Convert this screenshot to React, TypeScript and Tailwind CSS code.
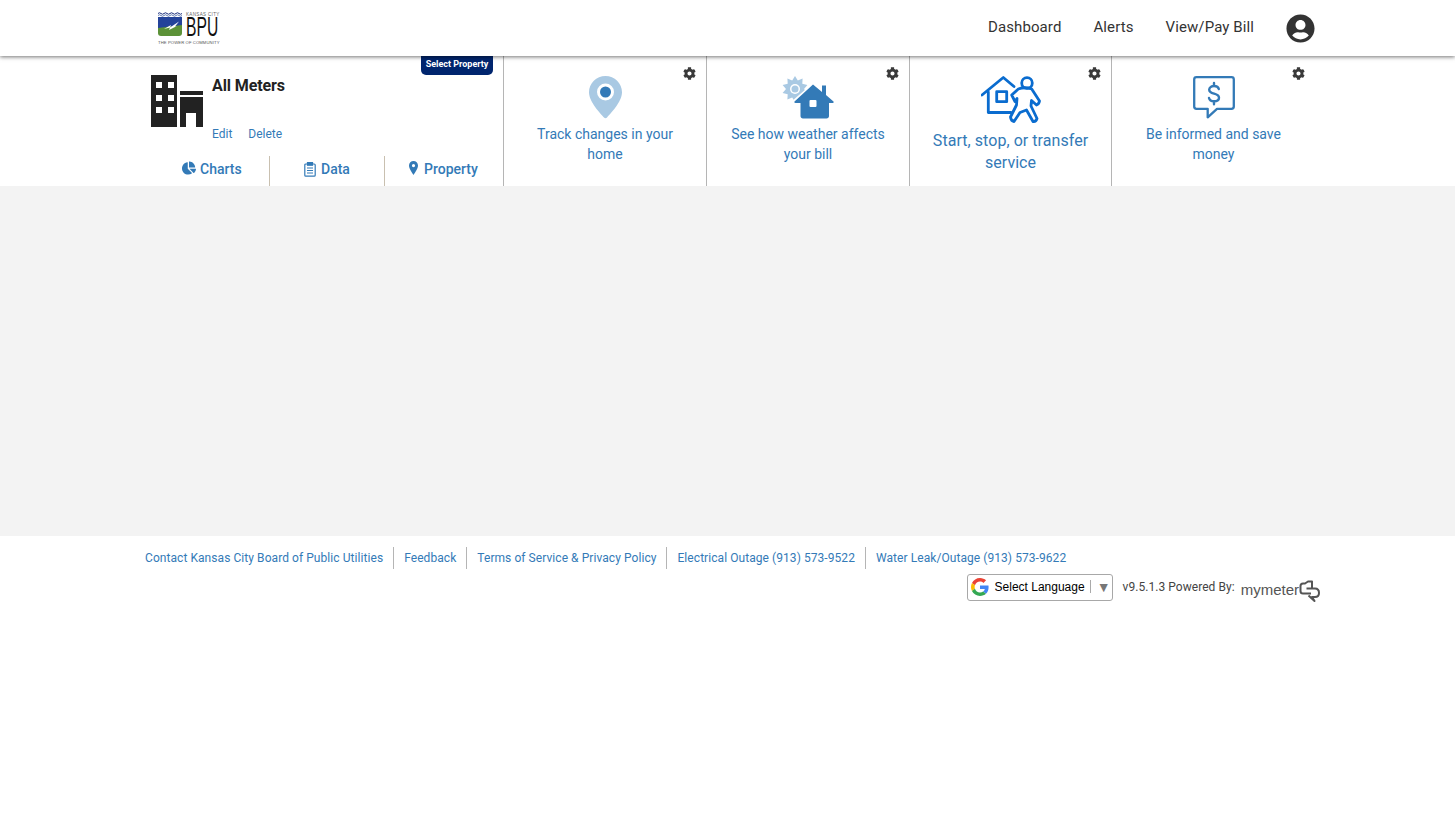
import React from "react";
import { FaUserCircle, FaCog, FaChartPie } from "react-icons/fa";

const blue = "text-[#337ab7]";

function Gear() {
  return <FaCog className="absolute right-[10px] top-[11px] text-[#3a3a3a]" size={13} />;
}

function Logo() {
  return (
    <div className="relative w-[62px] h-[36px] ml-[157px] self-start mt-[11px]">
      <svg width="25" height="26" viewBox="0 0 25 26" className="absolute left-[1px] top-[1px]">
        <path d="M0 1.500q1.500 -1.500 3 0t3 0t3 0t3 0t3 0t3 0t3 0t3 0" fill="none" stroke="#1c2f7c" strokeWidth="1" />
        <path d="M0 3.500q1.500 -1.500 3 0t3 0t3 0t3 0t3 0t3 0t3 0t3 0" fill="none" stroke="#3c5aa0" strokeWidth=".8" />
        <path d="M0 5h24v10L0 17z" fill="#24439a" />
        <path d="M0 16L24 13v8q0 3 -3 3H3q-3 0 -3 -3z" fill="#5c9238" />
        <path d="M6 17l7 -4l-1 2.500l9 -6l-4 5l2 -.5l-8 4l1 -2.500z" fill="#ffffff" />
      </svg>
      <span className="absolute left-[29px] top-[1px] text-[4.5px] leading-[5px] tracking-[0.35px] text-[#666] font-['Liberation_Sans',sans-serif] whitespace-nowrap">KANSAS CITY</span>
      <span className="absolute left-[29px] top-[6px] text-[28px] leading-[20px] text-[#111] font-['Liberation_Sans',sans-serif] origin-left scale-x-[0.56] whitespace-nowrap">BPU</span>
      <span className="absolute left-[1px] top-[29px] text-[4.2px] leading-[5px] tracking-[0.1px] text-[#555] font-['Liberation_Sans',sans-serif] whitespace-nowrap">THE POWER OF COMMUNITY</span>
    </div>
  );
}

function Building() {
  return (
    <svg width="52" height="52" viewBox="0 0 52 52" className="shrink-0">
      <path fillRule="evenodd" fill="#222" d="M0 0h26v52H0zM5 7v6h6V7zm12 0v6h6V7zM5 20v6h6v-6zm12 0v6h6v-6zM5 32v6h6v-6zm12 0v6h6v-6z" />
      <path fill="#222" d="M29 16h23v4H29z" />
      <path fillRule="evenodd" fill="#222" d="M29 22h23v30h-7V38H35v14h-6z" />
    </svg>
  );
}

function Clipboard() {
  return (
    <svg width="12" height="15" viewBox="0 0 12 15" fill="none" stroke="#337ab7" strokeWidth="1.2">
      <rect x="0.8" y="2" width="10.4" height="12.2" rx="1" />
      <rect x="3.500" y="0.6" width="5" height="2.600" fill="#337ab7" />
      <path d="M3 6h6M3 8.500h6M3 11h6" />
    </svg>
  );
}

function SmallPin() {
  return (
    <svg width="9" height="14" viewBox="0 0 9 14" className="mb-[2px]">
      <path fillRule="evenodd" fill="#337ab7" d="M4.500 0C2 0 0 2 0 4.500 0 7.500 3 11.500 4.500 14 6 11.500 9 7.500 9 4.500 9 2 7 0 4.500 0zm0 3a1.600 1.600 0 1 1 0 3.200 1.600 1.600 0 0 1 0-3.200z" />
    </svg>
  );
}

function Pin() {
  return (
    <svg width="33" height="43" viewBox="0 0 33 43">
      <path d="M16.500 0C7.400 0 0 7.300 0 16.300 0 26 12 38 15 41.500c.8 1 2.200 1 3 0C21 38 33 26 33 16.300 33 7.300 25.600 0 16.500 0z" fill="#a9c9e3" />
      <circle cx="16.500" cy="16" r="8.500" fill="#fff" />
      <circle cx="16.500" cy="16" r="5.500" fill="#337ab7" />
    </svg>
  );
}

function sunPath() {
  const pts: string[] = [];
  for (let i = 0; i < 20; i++) {
    const a = (i * Math.PI) / 10;
    const r = i % 2 === 0 ? 13 : 9;
    pts.push(`${(13 + r * Math.sin(a)).toFixed(1)} ${(13 - r * Math.cos(a)).toFixed(1)}`);
  }
  return `M${pts.join("L")}z`;
}

function SunHouse() {
  return (
    <svg width="53" height="43" viewBox="0 0 53 43">
      <path d={sunPath()} fill="#a9c9e3" />
      <circle cx="13" cy="13" r="5" fill="#fff" />
      <circle cx="13" cy="13" r="3.500" fill="#a9c9e3" />
      <path d="M10 25L31 7l8 6.500V8h6v10.500l8 7v3H47V44H17V28.500H10z" fill="#fff" />
      <path d="M12.500 25.500L31 8.500l9 7.500V9.500h4V19l7.500 6.500c.5.800 0 1.500-1 1.500h-3.500V40c0 1.500-1 2.500-2.500 2.500H21c-1.500 0-2.500-1-2.500-2.500V27H13.500c-1 0-1.500-.8-1-1.500z" fill="#337ab7" />
      <rect x="27.500" y="24" width="7" height="7" rx="1" fill="#fff" />
    </svg>
  );
}

function Mover() {
  return (
    <svg width="60" height="48" viewBox="0 0 60 48" fill="none" stroke="#0a6ccf" strokeWidth="2.800" strokeLinejoin="round" strokeLinecap="round">
      <path d="M1 19L22.300 1.500 33 10.500" />
      <path d="M7.300 16v20.500h22.500" />
      <rect x="15.700" y="15.700" width="10" height="10" />
      <circle cx="46" cy="7" r="5.300" />
      <path d="M30.700 19L37.300 13Q44 10.500 50.700 13L58.500 25Q58 28 55.500 29L50.500 24.500L50 30L56 42.500Q55 46 52 45.500L45.500 34L39 36.500L33 45.500Q30 45 29.500 41L35.500 29L36 22.500L34 25.500Z" />
    </svg>
  );
}

function Bubble() {
  return (
    <svg width="43" height="43" viewBox="0 0 43 43" fill="none" className="ml-[2px]">
      <path d="M3.500 1.200h35c1.300 0 2.300 1 2.300 2.300v27c0 1.300-1 2.300-2.300 2.300H24l-9.300 8.500v-8.500H3.500c-1.300 0-2.300-1-2.300-2.300v-27c0-1.300 1-2.300 2.300-2.300z" stroke="#337ab7" strokeWidth="2.300" strokeLinejoin="round" />
      <path d="M25.800 13c-.4-1.800-2.500-3-4.800-3s-4.800 1.200-4.800 3.700c0 5.300 9.800 2.700 9.800 8 0 2.500-2.500 3.600-5 3.600s-4.500-1.100-5-3.300M21 7v3M21 25.300v3" stroke="#337ab7" strokeWidth="2.400" strokeLinecap="round" />
    </svg>
  );
}

function GoogleG() {
  return (
    <svg width="18" height="18" viewBox="0 0 48 48" className="shrink-0 mb-[2px]">
      <path fill="#EA4335" d="M24 9.500c3.500 0 6.700 1.200 9.200 3.600l6.900-6.900C35.900 2.400 30.500 0 24 0 14.600 0 6.500 5.400 2.600 13.200l8 6.200C12.400 13.700 17.700 9.500 24 9.500z" />
      <path fill="#4285F4" d="M46.900 24.500c0-1.600-.2-3.100-.4-4.500H24v9h12.900c-.6 3-2.200 5.500-4.700 7.200l7.700 6c4.500-4.200 7-10.300 7-17.700z" />
      <path fill="#FBBC05" d="M10.500 28.600c-.5-1.400-.8-3-.8-4.600s.3-3.200.8-4.600l-8-6.200C.9 16.500 0 20.100 0 24s.9 7.500 2.600 10.800l7.900-6.200z" />
      <path fill="#34A853" d="M24 48c6.500 0 11.900-2.100 15.900-5.800l-7.700-6c-2.200 1.400-4.900 2.300-8.200 2.300-6.300 0-11.600-4.200-13.500-9.900l-8 6.200C6.500 42.600 14.600 48 24 48z" />
    </svg>
  );
}

function MyMeterMark() {
  return (
    <svg width="21" height="22" viewBox="0 0 21 22" fill="none" stroke="#555" strokeWidth="2" strokeLinejoin="round">
      <path d="M12 13.500H4Q1.500 13.500 1.500 11V6Q1.500 3.500 4 3.500H6L9 1.500H13V8" />
      <path d="M7.500 8.500H16Q20 8.500 20 13Q20 17 16 17H13L15.500 21L9.500 15.500" />
    </svg>
  );
}

function Tile({ children, label, big, width }: { children: React.ReactNode; label: string; big?: boolean; width: string }) {
  return (
    <div className={`relative border-l border-[#b5b5b5] flex flex-col items-center ${width}`}>
      <Gear />
      <div className={`flex items-end justify-center ${big ? "mt-[19px] h-[49px]" : "mt-[20px] h-[43px]"}`}>{children}</div>
      <p className={`text-center text-[#337ab7] w-[170px] ${big ? "mt-[6px] text-[16px] tracking-[0.05px] leading-[22px]" : "mt-[5px] text-[14px] leading-[20px]"}`}>{label}</p>
    </div>
  );
}

export default function App() {
  return (
    <div className="min-h-[832px] bg-white font-['Roboto',sans-serif]">
      <header className="relative z-10 h-[56px] bg-white shadow-[0_1px_4px_rgba(0,0,0,0.55)] flex items-center">
        <Logo />
        <nav className="ml-auto mr-[140px] flex items-center gap-[32px] text-[15px] tracking-[0.1px] text-[#333]">
          <span className="mb-[2px]">Dashboard</span>
          <span className="mb-[2px]">Alerts</span>
          <span className="mb-[2px]">View/Pay Bill</span>
          <FaUserCircle size={29} className="text-[#333]" />
        </nav>
      </header>

      <section className="h-[130px] flex pl-[145px] pr-[140px]">
        <div className="relative w-[358px] shrink-0">
          <div className="absolute right-[10px] top-0 h-[19px] w-[72px] rounded-b-[5px] bg-[#00256e] text-white text-[9px] font-bold leading-[16px] text-center whitespace-nowrap">Select Property</div>
          <div className="flex pl-[6px] pt-[19px] h-[100px]">
            <Building />
            <div className="ml-[9px] flex flex-col">
              <div className="mt-[1px] text-[16px] tracking-[-0.1px] font-bold text-[#222] leading-[20px]">All Meters</div>
              <div className={`mt-[30px] flex gap-[16px] text-[12px] leading-[16px] ${blue}`}>
                <span>Edit</span>
                <span>Delete</span>
              </div>
            </div>
          </div>
          <div className={`flex h-[30px] text-[14px] font-medium ${blue}`}>
            <div className="w-[125px] flex items-center gap-[4px] pl-[37px] pb-[4px] border-r border-[#c9c0b0]">
              <FaChartPie size={14} className="mb-[2px]" /><span>Charts</span>
            </div>
            <div className="w-[115px] flex items-center gap-[5px] pl-[34px] pb-[4px] border-r border-[#c9c0b0]">
              <Clipboard /><span>Data</span>
            </div>
            <div className="flex-1 flex items-center gap-[6px] pl-[24px] pb-[4px]">
              <SmallPin /><span>Property</span>
            </div>
          </div>
        </div>
        <Tile width="w-[203px]" label="Track changes in your home"><Pin /></Tile>
        <Tile width="w-[203px]" label="See how weather affects your bill"><SunHouse /></Tile>
        <Tile width="w-[202px]" label="Start, stop, or transfer service" big><Mover /></Tile>
        <Tile width="flex-1" label="Be informed and save money"><Bubble /></Tile>
      </section>

      <main className="h-[350px] bg-[#f3f3f3]" />

      <footer className="pl-[145px] pr-[135px] pt-[11px]">
        <div className={`flex items-center text-[12px] tracking-[0.065px] leading-[22px] ${blue}`}>
          <span className="pr-[10px] border-r border-[#b5b5b5]">Contact Kansas City Board of Public Utilities</span>
          <span className="px-[10px] border-r border-[#b5b5b5]">Feedback</span>
          <span className="px-[10px] border-r border-[#b5b5b5]">Terms of Service &amp; Privacy Policy</span>
          <span className="px-[10px] border-r border-[#b5b5b5]">Electrical Outage (913) 573-9522</span>
          <span className="px-[10px]">Water Leak/Outage (913) 573-9622</span>
        </div>
        <div className="mt-[3px] flex justify-end items-center">
          <div className="w-[146px] h-[27px] border border-[#a8a8a8] rounded-[3px] flex items-center pl-[3px] font-['Liberation_Sans',sans-serif] text-[12px] text-black">
            <GoogleG />
            <span className="ml-[6px] mb-[2px]">Select Language</span>
            <span className="ml-[5px] mb-[2px] h-[13px] border-l border-[#aaa]" />
            <span className="ml-[6px] mb-[2px] text-[#777] text-[14px] leading-none">▼</span>
          </div>
          <span className="ml-[10px] mb-[2px] text-[12px] tracking-[0.05px] text-[#444]">v9.5.1.3 Powered By:</span>
          <span className="ml-[6px] mt-[7px] flex items-center">
            <span className="mb-[2px] font-['Liberation_Sans',sans-serif] text-[15px] text-[#555]">mymeter</span>
            <MyMeterMark />
          </span>
        </div>
      </footer>
    </div>
  );
}
